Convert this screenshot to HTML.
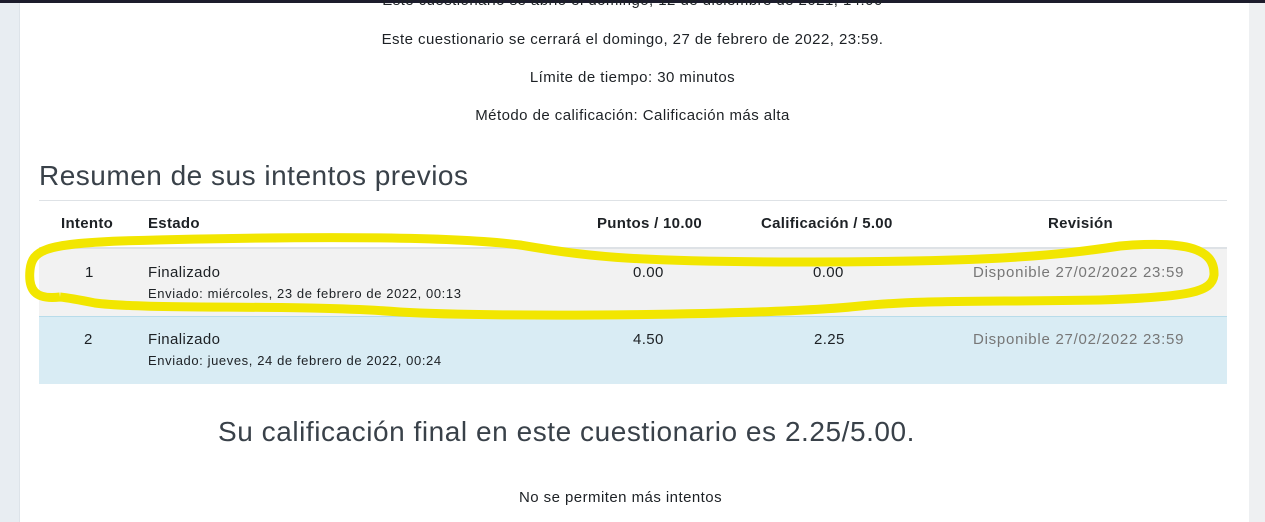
<!DOCTYPE html>
<html><head><meta charset="utf-8"><style>
body{margin:0;width:1265px;height:522px;overflow:hidden;background:#e8edf2;font-family:"Liberation Sans",sans-serif;color:#1d2125;position:relative}
.top{position:absolute;left:0;top:0;width:1265px;height:3px;background:#1c1c2c}
.panel{position:absolute;left:19px;top:3px;width:1229px;height:519px;background:#fff;border-left:1px solid #dde3e9;border-right:1px solid #dde3e9}
.rs{position:absolute;left:1249px;top:3px;width:16px;height:519px;background:#eef0f2}
.c{position:absolute;left:0;width:1265px;text-align:center;font-size:15px;letter-spacing:0.45px}
.t{position:absolute;font-size:15px;white-space:nowrap;letter-spacing:0.4px}
.b{font-weight:bold;letter-spacing:0.3px}
</style></head><body>
<div class="top"></div><div class="panel"></div><div class="rs"></div>
<div class="c" style="top:-8px">Este cuestionario se abrió el domingo, 12 de diciembre de 2021, 14:00</div>
<div class="c" style="top:31px">Este cuestionario se cerrará el domingo, 27 de febrero de 2022, 23:59.</div>
<div class="c" style="top:69px">Límite de tiempo: 30 minutos</div>
<div class="c" style="top:107px">Método de calificación: Calificación más alta</div>
<div style="position:absolute;left:39px;top:160px;font-size:28px;letter-spacing:0.5px;color:#394149">Resumen de sus intentos previos</div>
<div style="position:absolute;left:39px;top:200px;width:1188px;height:1px;background:#dee2e6"></div>
<div style="position:absolute;left:39px;top:247px;width:1188px;height:2px;background:#dee2e6"></div>
<div style="position:absolute;left:39px;top:249px;width:1188px;height:67px;background:#f2f2f2"></div>
<div style="position:absolute;left:39px;top:316px;width:1188px;height:67px;background:#d9ecf4;border-top:1px solid #b8dcea"></div>
<div class="t b" style="left:61px;top:215px">Intento</div>
<div class="t b" style="left:148px;top:215px">Estado</div>
<div class="t b" style="left:597px;top:215px">Puntos / 10.00</div>
<div class="t b" style="left:761px;top:215px">Calificación / 5.00</div>
<div class="t b" style="left:1048px;top:215px">Revisión</div>
<div class="t" style="left:85px;top:264px">1</div>
<div class="t" style="left:148px;top:264px">Finalizado</div>
<div class="t" style="left:148px;top:286px;font-size:13px;letter-spacing:0.6px">Enviado: miércoles, 23 de febrero de 2022, 00:13</div>
<div class="t" style="left:633px;top:264px">0.00</div>
<div class="t" style="left:813px;top:264px">0.00</div>
<div class="t" style="left:973px;top:264px;color:#777;letter-spacing:0.75px">Disponible 27/02/2022 23:59</div>
<div class="t" style="left:84px;top:331px">2</div>
<div class="t" style="left:148px;top:331px">Finalizado</div>
<div class="t" style="left:148px;top:353px;font-size:13px;letter-spacing:0.6px">Enviado: jueves, 24 de febrero de 2022, 00:24</div>
<div class="t" style="left:633px;top:331px">4.50</div>
<div class="t" style="left:814px;top:331px">2.25</div>
<div class="t" style="left:973px;top:331px;color:#777;letter-spacing:0.75px">Disponible 27/02/2022 23:59</div>
<svg style="position:absolute;left:0;top:0" width="1265" height="522"><path d="M60 297 C35 300 28 290 30 270 C32 250 45 244 120 241 C300 236 450 236 520 245 C580 255 620 262 800 262 C1000 262 1060 255 1120 246 C1190 240 1215 250 1214 275 C1212 292 1190 297 1100 300 C980 302 920 300 860 306 C780 315 500 318 400 312 C300 304 150 310 95 303 C70 298 60 297 60 297" fill="none" stroke="#f2e600" stroke-width="9"/></svg>
<div style="position:absolute;top:416px;left:218px;font-size:28px;letter-spacing:0.55px;color:#394149;white-space:nowrap">Su calificación final en este cuestionario es 2.25/5.00.</div>
<div class="c" style="top:489px;left:-12px">No se permiten más intentos</div>
</body></html>
